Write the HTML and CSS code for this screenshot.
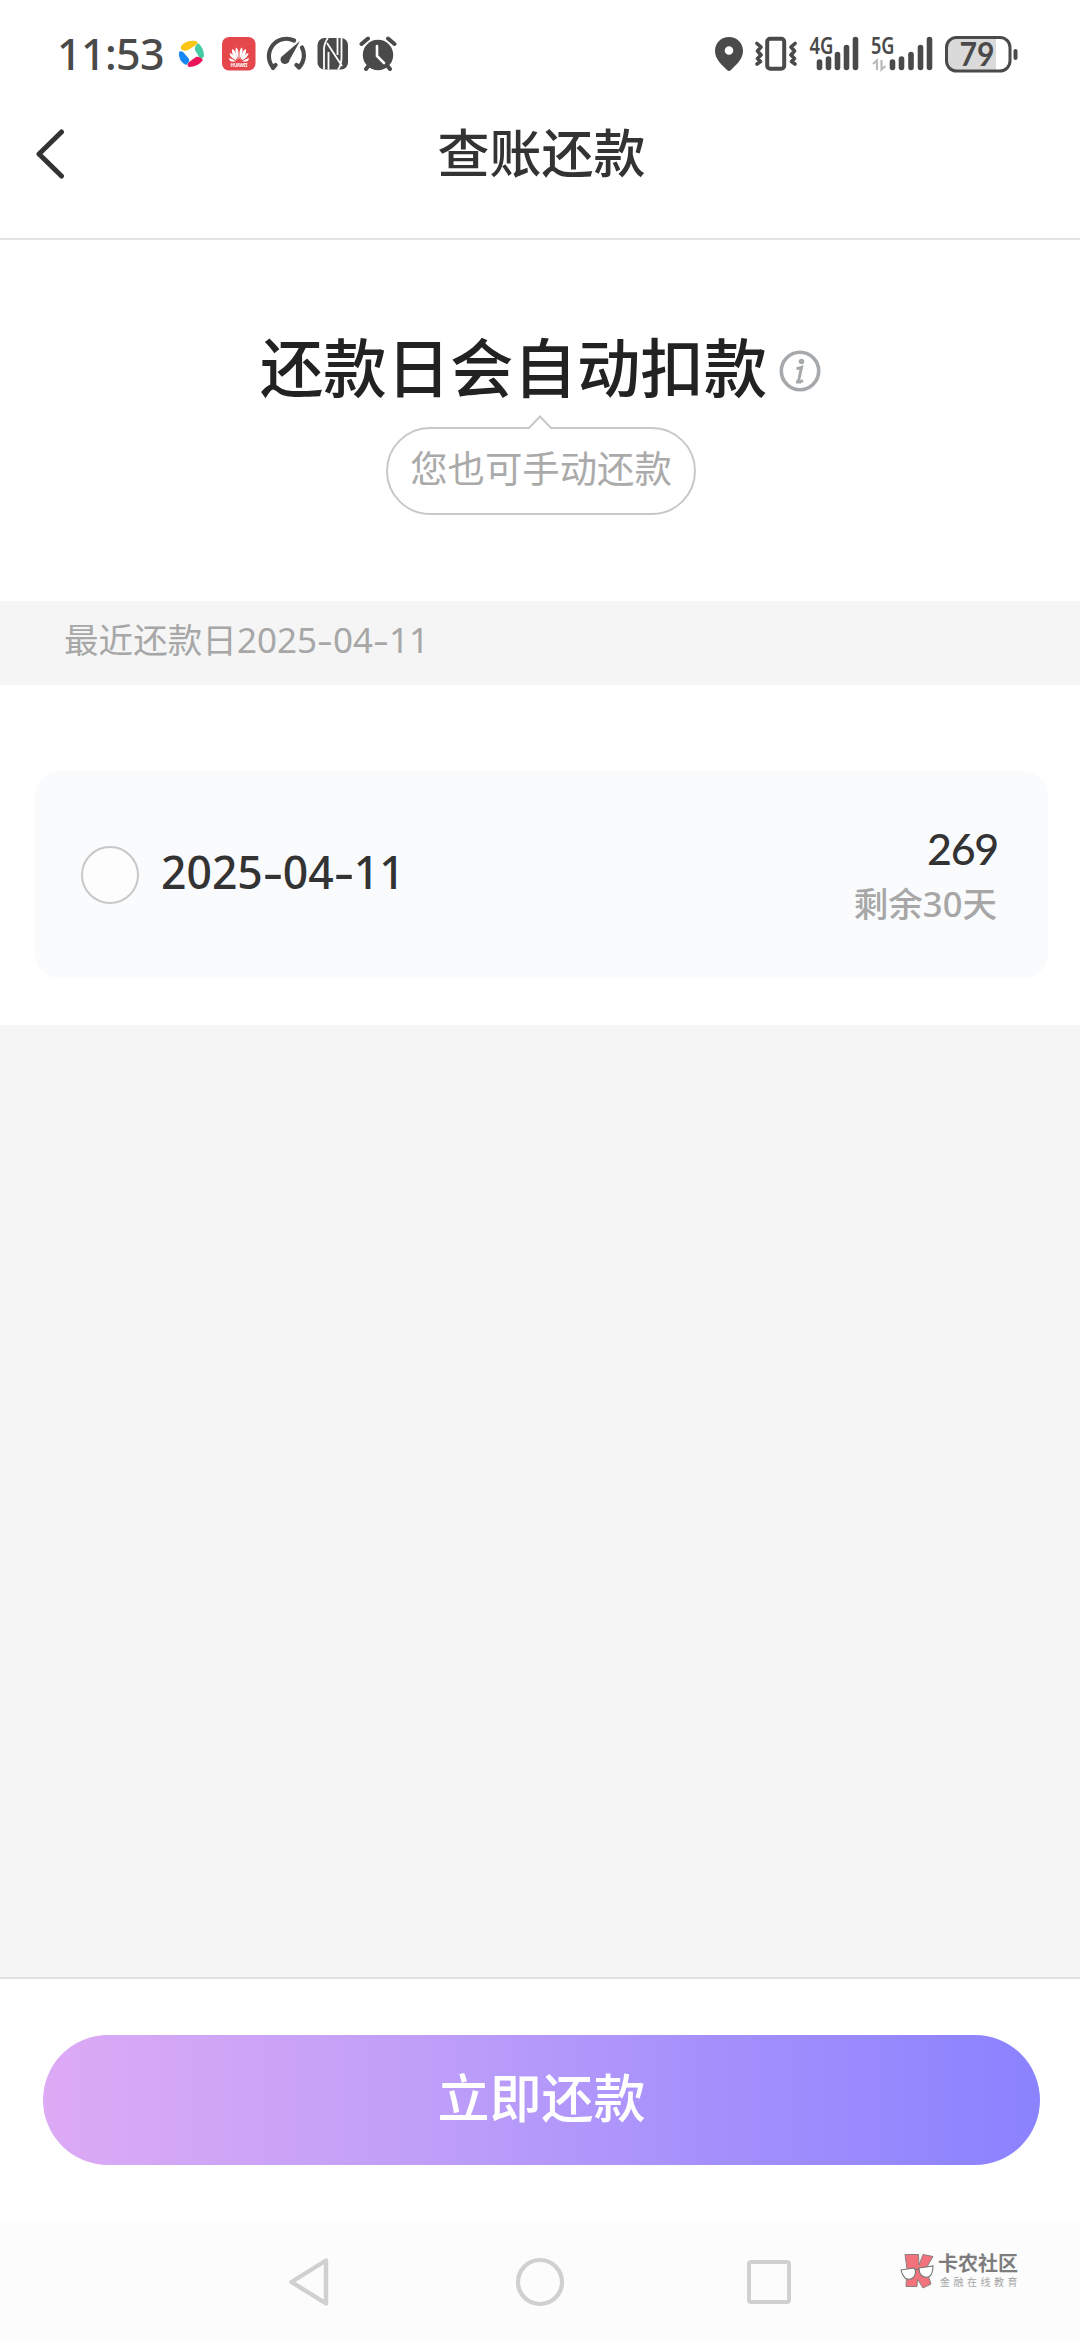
FILE: index.html
```html
<!DOCTYPE html>
<html lang="zh-CN">
<head>
<meta charset="utf-8">
<title>查账还款</title>
<link rel="stylesheet" href="styles.css">
</head>
<body>
<div class="screen">
  <div class="status">
    <span class="clock">11:53</span>
    <svg class="s-fan" viewBox="178 36 28 36" width="28" height="36">
      <path d="M181 46Q186 40 196 41Q199 42 196 45L188 50Q184 52 181 49Z" fill="#fbc514"/>
      <path d="M198 43Q204 48 204 56Q202 61 199 57L195 50Q194 47 198 43Z" fill="#47cba2"/>
      <path d="M203 60Q198 67 189 67Q186 65 189 62L196 57Q200 56 203 60Z" fill="#ea1558"/>
      <path d="M186 65Q178 61 179 52Q182 50 184 53L189 59Q190 62 186 65Z" fill="#1688f5"/>
    </svg>
    <svg class="s-hw" viewBox="222 36 34 36" width="34" height="36">
      <rect x="222" y="37" width="33.500" height="33.500" rx="7" fill="#e6474c"/>
      <g fill="#fff">
        <path d="M238.500 59Q234 52 236 47.500Q239 48 238.500 59Z"/>
        <path d="M237.500 60Q231 55 232 49Q236 50 237.500 60Z"/>
        <path d="M236.500 60.500Q230 58 229.500 53Q234 54 236.500 60.500Z"/>
        <path d="M236 61.500H231Q229 60 229 58Q233 59 236 61.500Z"/>
        <path d="M239.500 59Q244 52 242 47.500Q239 48 239.500 59Z"/>
        <path d="M240.500 60Q247 55 246 49Q242 50 240.500 60Z"/>
        <path d="M241.500 60.500Q248 58 248.500 53Q244 54 241.500 60.500Z"/>
        <path d="M242 61.500H247Q249 60 249 58Q245 59 242 61.500Z"/>
        <text x="230.500" y="66.500" font-size="4.500" textLength="17" font-weight="700">HUAWEI</text>
      </g>
    </svg>
    <svg class="s-gauge" viewBox="265 36 42 36" width="42" height="36">
      <path d="M273 68L275.500 65M273 67.500A17.500 17.500 0 0 1 294 40.500M302 47.500A17.500 17.500 0 0 1 299 67.500L296.500 65" fill="none" stroke="#4a4a4a" stroke-width="4.200" stroke-linecap="round" stroke-linejoin="round"/>
      <path d="M300 41L289.500 60A4.500 4.500 0 1 1 283 55.500Z" fill="#4a4a4a"/>
    </svg>
    <svg class="s-nfc" viewBox="317 36 32 36" width="32" height="36">
      <rect x="317.500" y="38" width="30.500" height="31.500" rx="7" fill="#4a4a4a"/>
      <path d="M328 38Q324 43 324 50V69.500M327 43L342 66M328.500 52V69.500M337.500 38V55M341.500 38V58Q341.500 65 338 69.500" fill="none" stroke="#fff" stroke-width="1.800"/>
    </svg>
    <svg class="s-alarm" viewBox="359 36 38 36" width="38" height="36">
      <circle cx="378" cy="55" r="15.200" fill="#4a4a4a"/>
      <path d="M361.500 44L368 38.500M388 38.500L394.500 44M366 69L370 64M390 69L386 64" stroke="#4a4a4a" stroke-width="4" stroke-linecap="round"/>
      <path d="M377 46V56L384 63" fill="none" stroke="#fff" stroke-width="2.600" stroke-linecap="round"/>
    </svg>
    <div class="spacer"></div>
    <svg class="s-pin" viewBox="715 36 28 36" width="28" height="36">
      <path fill-rule="evenodd" d="M729 37C737 37 743 43 743 51C743 59 736 65 731 70Q729 72 727 70C722 65 715 59 715 51C715 43 721 37 729 37ZM729 46.200A4.300 4.300 0 1 0 729 54.800A4.300 4.300 0 1 0 729 46.200Z" fill="#4a4a4a"/>
    </svg>
    <svg class="s-vib" viewBox="754 36 44 36" width="44" height="36">
      <rect x="767.200" y="38.700" width="17" height="30" rx="3" fill="none" stroke="#4a4a4a" stroke-width="4"/>
      <path d="M757 43.500L761 47L757.500 51L761 55L757.500 58.500L760.500 61.500L757 64M795 43.500L791 47L794.500 51L791 55L794.500 58.500L791.500 61.500L795 64" fill="none" stroke="#4a4a4a" stroke-width="3.600" stroke-linecap="round" stroke-linejoin="round"/>
    </svg>
    <svg class="s-4g" viewBox="809 24 50 60" width="50" height="60">
      <path d="M819.500 62V67.500M828.500 59V67.500M837.500 54.500V67.500M846.500 47.500V67.500M855.500 39.500V67.500" stroke="#4a4a4a" stroke-width="5.600" stroke-linecap="round"/>
      <text x="809.500" y="54" font-size="22.500" textLength="24" lengthAdjust="spacingAndGlyphs" font-weight="600">4G</text>
    </svg>
    <svg class="s-5g" viewBox="871 24 62 60" width="62" height="60">
      <path d="M892.500 62V67.500M901.500 59V67.500M911 54.500V67.500M920.500 47.500V67.500M929.500 39.500V67.500" stroke="#4a4a4a" stroke-width="5.600" stroke-linecap="round"/>
      <path d="M873 64L877 60.500V70M881.500 60V69.500L885.500 66" fill="none" stroke="#bbb" stroke-width="2.200"/>
      <text x="871" y="54" font-size="22.500" textLength="23.500" lengthAdjust="spacingAndGlyphs" font-weight="600">5G</text>
    </svg>
    <svg class="s-bat" viewBox="945 34 74 38" width="74" height="38">
      <path d="M996 37V69H955Q947 69 947 61V45Q947 37 955 37Z" fill="#dadada"/>
      <rect x="946.500" y="36.500" width="63.500" height="33.500" rx="10" fill="none" stroke="#4a4a4a" stroke-width="3"/>
      <rect x="1013.500" y="48" width="4" height="11" rx="2" fill="#4a4a4a"/>
      <text x="959.500" y="65" font-size="31.500" textLength="35" lengthAdjust="spacingAndGlyphs" font-weight="700" class="lato">79</text>
    </svg>
  </div>

  <header class="header">
    <svg class="back" viewBox="0 0 30 52" width="30" height="52"><path d="M26.500 4L4 26L26.500 48" fill="none" stroke="#333" stroke-width="5" stroke-linecap="round" stroke-linejoin="round"/></svg>
    <h1>查账还款</h1>
  </header>

  <section class="hero">
    <div class="hero-title">
      <h2>还款日会自动扣款</h2>
      <svg class="info" viewBox="0 0 42 42" width="42" height="42"><circle cx="21" cy="21" r="18.700" fill="none" stroke="#a6a9ac" stroke-width="3.600"/><circle cx="22.500" cy="11.500" r="2.800" fill="#a6a9ac"/><path d="M17.500 18.500Q20 18.500 22.500 17.500L19.500 31Q20 33 24 30.500M17 32H22" fill="none" stroke="#a6a9ac" stroke-width="3"/></svg>
    </div>
    <div class="bubble">
      <svg class="tip" viewBox="0 0 28 15" width="28" height="15"><path d="M2 12.500L14 0L26 12.500V15H2Z" fill="#fff"/><path d="M1 13H3L14 1.500L25 13H27" fill="none" stroke="#c8c8c8" stroke-width="2"/></svg>
      您也可手动还款
    </div>
  </section>

  <div class="band">最近还款日<span>2025<i>-</i>04<i>-</i>11</span></div>

  <main class="list">
    <div class="card">
      <span class="radio"></span>
      <span class="date">2025<i>-</i>04<i>-</i>11</span>
      <div class="amount">
        <strong>269</strong>
        <span>剩余<b>30</b>天</span>
      </div>
    </div>
  </main>

  <div class="void"></div>

  <footer class="footer"><button>立即还款</button></footer>

  <nav class="nav">
    <svg class="n-back" viewBox="0 0 42 50" width="42" height="50"><path d="M38 3.500V46.500L3.500 25Z" fill="none" stroke="#d0d0d0" stroke-width="4.400" stroke-linejoin="round"/></svg>
    <svg class="n-home" viewBox="0 0 50 50" width="50" height="50"><circle cx="25" cy="25" r="22" fill="none" stroke="#d0d0d0" stroke-width="4.200"/></svg>
    <svg class="n-recent" viewBox="0 0 44 44" width="44" height="44"><rect x="2" y="2" width="40" height="40" rx="2" fill="none" stroke="#d0d0d0" stroke-width="4"/></svg>
    <div class="brand">
      <svg viewBox="0 0 36 36" width="36" height="36">
        <path d="M5 1.500H18.500L19 12L23 1.500L33 3.500L26 15.500L31 31L23 35L17.500 26L17 33.500H6L7 16Z" fill="#f2737b" stroke="#8a8082"/>
        <path d="M1 17L14 15Q17 18 14 24Q10 28 5 25Q2 22 1 17ZM19 15L33 13Q33 20 30 23Q25 26 21 22Q19 19 19 15ZM15 17L19 16" fill="#fff" stroke="#777" stroke-width="1.100"/>
      </svg>
      <div class="brand-text"><b>卡农社区</b><small>金融在线教育</small></div>
    </div>
  </nav>
</div>
</body>
</html>
```

FILE: styles.css
```css
* { box-sizing: border-box; }
body { margin: 0; background: #fff; }
.screen {
  width: 1080px; height: 2340px; display: flex; flex-direction: column; overflow: hidden;
  font-family: "Noto Sans", "Noto Sans CJK SC", sans-serif; color: #333; background: #fff;
}
.screen > * { flex: none; }
svg { display: block; flex: none; }
h1, h2 { margin: 0; font-weight: 500; white-space: nowrap; font-family: "Noto Sans CJK SC", sans-serif; }
i { font-style: normal; display: inline-block; text-align: center; }

.status { height: 108px; display: flex; align-items: center; padding: 0 61px 0 57px; }
.status svg text { fill: #4a4a4a; font-family: "Noto Sans", sans-serif; }
.status .s-hw text { fill: #fff; }
.status svg text.lato { font-family: Lato, sans-serif; }
.clock { width: 121px; font-size: 43px; line-height: 60px; color: #4a4a4a; letter-spacing: -.6px; font-weight: 500; }
.s-hw { margin-left: 16px; }
.s-gauge { margin-left: 9px; }
.s-nfc { margin-left: 10px; }
.s-alarm { margin-left: 10px; }
.spacer { flex: 1; }
.s-vib { margin-left: 11px; }
.s-4g { margin-left: 11px; }
.s-5g { margin-left: 12px; }
.s-bat { margin-left: 12px; }

.header { height: 132px; display: grid; grid-template-columns: 72px 1fr 72px; align-items: start; padding-top: 17px; border-bottom: 2px solid #e4e4e4; }
.back { margin: 3px 0 0 35px; }
.header h1 { text-align: center; font-size: 52px; line-height: 52px; padding-left: 3px; }

.hero { height: 361px; padding-top: 82px; display: flex; flex-direction: column; align-items: center; }
.hero-title { display: flex; align-items: center; gap: 12px; height: 84px; padding-left: 1px; }
h2 { color: #222; font-size: 63.400px; line-height: 84px; }
.info { margin-top: 14px; }
.bubble {
  position: relative; margin-top: 21px; width: 310px; height: 88px; border: 2px solid #c8c8c8; border-radius: 44px;
  text-align: center; font: 400 37.400px/77px "Noto Sans CJK SC", sans-serif; color: #aaa; left: 1px;
}
.tip { position: absolute; left: 138px; top: -14px; }

.band { height: 84px; padding-left: 64px; background: #f5f5f5; color: #a7a7a7; font: 400 34.600px/75px "Noto Sans CJK SC", sans-serif; }
.band span { font-family: "Noto Sans", sans-serif; font-size: 35px; }
.band i { width: 16px; transform: scaleX(1.4); }

.list { height: 340px; padding: 86px 32px 47px 35px; }
.card { height: 207px; border-radius: 24px; background: #fafbfd; display: flex; align-items: center; padding: 0 51px 0 46px; }
.radio { width: 58px; height: 58px; border: 2px solid #c8c8c8; border-radius: 50%; background: #fdfdfd; }
.date { margin: 0 0 5px 22px; font-size: 44.500px; font-weight: 500; line-height: 60px; }
.date i { width: 20px; transform: scaleX(1.4); }
.amount { margin-left: auto; display: flex; flex-direction: column; align-items: flex-end; }
.amount strong { font: 500 43px/54px Lato, sans-serif; letter-spacing: -1.3px; padding-top: 2px; margin-right: -1px; }
.amount span { font: 500 34.600px/52px "Noto Sans CJK SC", sans-serif; color: #a7a7a7; }
.amount b { font-weight: 500; font-family: "Noto Sans", sans-serif; }

.void { height: 952px; background: #f5f5f5; }
.footer { height: 246px; border-top: 2px solid #e0e0e0; padding: 56px 40px 0 43px; }
.footer button {
  display: block; width: 100%; height: 130px; border: 0; border-radius: 65px; padding: 0 0 9px;
  color: #fff; font: 500 52px/121px "Noto Sans CJK SC", sans-serif; background: linear-gradient(90deg, #ddaaf5, #c2a0f8 35%, #a490fc 68%, #8b82ff);
}
.nav { height: 117px; background: #fcfcfc; display: flex; align-items: center; padding-left: 288px; }
.n-home { margin-left: 185px; }
.n-recent { margin-left: 182px; }
.brand { margin: -22px 0 0 109px; display: flex; gap: 2px; }
.brand-text { display: flex; flex-direction: column; font-family: "Noto Sans CJK SC", sans-serif; white-space: nowrap; }
.brand-text b { font-size: 20px; font-weight: 700; line-height: 20px; color: #7d7d7d; }
.brand-text small { font-size: 10px; letter-spacing: 3.500px; line-height: 14px; color: #a5a5a5; padding: 2px 0 0 2px; }
```
